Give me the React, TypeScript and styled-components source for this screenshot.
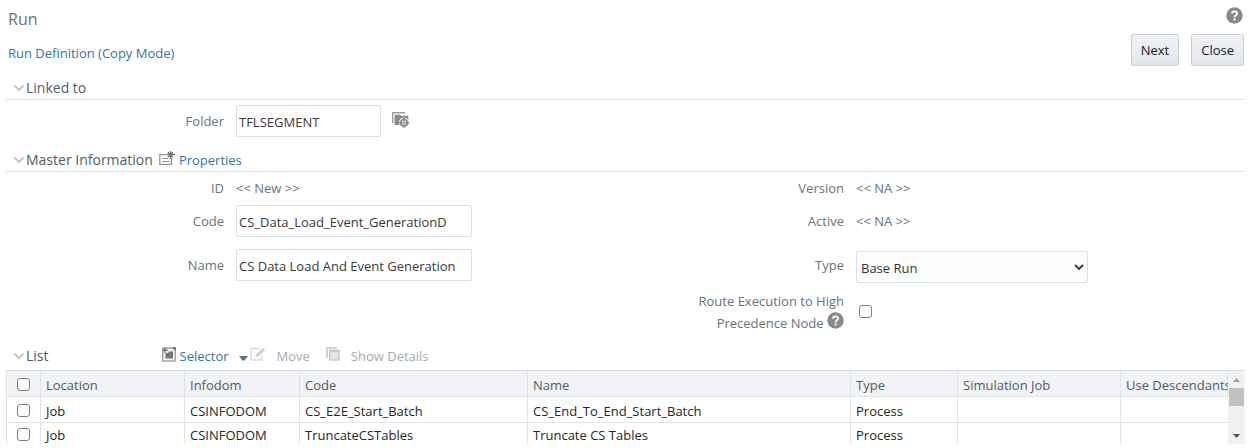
import React from "react";
import styled, { createGlobalStyle } from "styled-components";

const colors = {
  label: "#68737b",
  heading: "#515d66",
  link: "#2f74b0",
  line: "#dfe4e7",
  icon: "#868b8f",
  muted: "#a9a9a9",
};

const GlobalStyle = createGlobalStyle`
  *, *::before, *::after { box-sizing: border-box; }
  body {
    margin: 0;
    background: #fff;
    color: ${colors.label};
    font-family: "Open Sans", "Noto Sans", sans-serif;
    font-size: 13px;
    line-height: 18px;
  }
  button, input, select { font: inherit; margin: 0; }
`;

const Page = styled.main`
  padding: 7px 3px 2px 6px;
`;

const Header = styled.header`
  display: flex;
  justify-content: space-between;
  height: 71px;
  padding: 0 1px 0 2px;
`;

const Titles = styled.div`
  display: flex;
  flex-direction: column;
  gap: 14px;
  padding-top: 1px;
`;

const Title = styled.h1`
  margin: 0;
  font-size: 16px;
  font-weight: 400;
  line-height: 22px;
`;

const Actions = styled.div`
  display: flex;
  flex-direction: column;
  align-items: flex-end;
  gap: 10px;
`;

const ButtonRow = styled.div`
  display: flex;
  gap: 12px;
`;

const ActionButton = styled.button`
  height: 32px;
  padding: 0 9px;
  border: 1px solid #c9d2d9;
  border-radius: 2px;
  background: linear-gradient(#f1f3f6, #e2e6ea);
  color: #222;
`;

const IconButton = styled.button`
  display: inline-flex;
  padding: 0 1px 0 0;
  border: 0;
  background: none;
`;

const Link = styled.a`
  color: ${colors.link};
  text-decoration: none;
`;

const SectionHead = styled.div<{ $bare?: boolean }>`
  display: flex;
  align-items: center;
  height: ${(p) => (p.$bare ? 28 : 22)}px;
  padding: 0 0 ${(p) => (p.$bare ? 0 : 2)}px 7px;
  border-bottom: ${(p) => (p.$bare ? "0" : `1px solid ${colors.line}`)};
`;

const SectionTitle = styled.h2`
  display: flex;
  align-items: center;
  gap: 1px;
  margin: 0;
  color: ${colors.heading};
  font-size: 14px;
  font-weight: 400;
  line-height: 20px;
`;

const PropertiesLink = styled(Link)`
  display: flex;
  align-items: center;
  gap: 3px;
  margin-left: 6px;

  > svg { margin-bottom: 4px; }
`;

const Form = styled.div<{ $rows: string; $after: number }>`
  display: grid;
  grid-template-columns: minmax(0, 230fr) minmax(0, 390fr) minmax(0, 230fr) minmax(0, 389fr);
  grid-template-rows: ${(p) => p.$rows};
  align-items: center;
  padding-bottom: ${(p) => p.$after}px;
`;

const Label = styled.label`
  justify-self: end;
  max-width: 150px;
  padding-right: 12px;
  text-align: right;
`;

const WideLabel = styled(Label)`
  max-width: 160px;
  line-height: 22px;

  svg { vertical-align: -1px; }
`;

const Value = styled.div`
  display: flex;
  align-items: center;
  gap: 11px;
`;

const TextBox = styled.input<{ $width: number }>`
  width: ${(p) => p.$width}px;
  height: 32px;
  padding: 2px 2px 0;
  border: 1px solid #d9e0e4;
  border-radius: 2px;
  background: #fff;
  color: #3a3a3a;
`;

const SelectWrap = styled.div`
  display: grid;
  align-items: center;
  width: 232px;
  margin-top: 4px;

  > * { grid-area: 1 / 1; }
  > svg { justify-self: end; margin-right: 4px; pointer-events: none; }
`;

const Select = styled.select`
  appearance: none;
  width: 100%;
  height: 32px;
  padding: 2px 4px 0;
  border: 1px solid #d9e0e4;
  border-radius: 2px;
  background: #fbfdfd;
  color: #333;
`;

const CheckBox = styled.input.attrs({ type: "checkbox" })`
  appearance: none;
  display: block;
  width: 13px;
  height: 13px;
  border: 1px solid #7f7f7f;
  border-radius: 3px;
  background: #fff;

  &:checked { background: ${colors.link}; }
`;

const CheckCell = styled.div`
  padding: 0 3px;
`;

const Toolbar = styled.div`
  display: flex;
  align-items: center;
  margin-left: 113px;
`;

const Tool = styled.button<{ $gap: number; $after: number }>`
  display: flex;
  align-items: center;
  gap: ${(p) => p.$gap}px;
  margin-right: ${(p) => p.$after}px;
  padding: 0;
  border: 0;
  background: none;
  color: ${colors.link};

  &:disabled { color: ${colors.muted}; }
  > svg { margin-bottom: 4px; }
`;

const MenuMark = styled.span`
  display: flex;
  padding: 4px 0 0 6px;
`;

const ListFrame = styled.div`
  display: flex;
  border-top: 1px solid #d5dce1;
`;

const Table = styled.table`
  flex: 1;
  min-width: 0;
  width: 100%;
  table-layout: fixed;
  border-collapse: collapse;
  color: #262626;
`;

const HeadCell = styled.th`
  height: 25px;
  padding: 3px 0 0 5px;
  border: solid ${colors.line};
  border-width: 0 1px 1px;
  background: #f1f3f7;
  color: #555b61;
  font-weight: 400;
  text-align: left;
  white-space: nowrap;
`;

const Cell = styled.td`
  height: 26px;
  padding: 3px 0 0 5px;
  border: solid ${colors.line};
  border-width: 0 1px 1px;
  white-space: nowrap;

  tr:last-child > & { border-bottom: 0; height: 22px; }
  &:last-child { border-right: 0; }
`;

const RowCheck = styled(CheckBox)`
  margin-left: 5px;
`;

const ScrollBar = styled.div`
  display: flex;
  flex-direction: column;
  align-items: center;
  width: 17px;
  background: #f1f1f1;
`;

const ScrollArrow = styled.button`
  display: flex;
  align-items: center;
  justify-content: center;
  width: 17px;
  height: 17px;
  padding: 0;
  border: 0;
  background: none;
`;

const Track = styled.div`
  flex: 1;
`;

const Thumb = styled.div`
  width: 15px;
  height: 18px;
  background: #c1c1c1;
`;

const HelpIcon = () => (
  <svg width="17" height="17" viewBox="0 0 17 17" aria-hidden="true">
    <circle cx="8.5" cy="8.5" r="8.2" fill={colors.icon} />
    <path d="M6 6.6C6 3.6 11 3.6 11 6.5C11 8.3 8.6 8.2 8.6 10.2" fill="none" stroke="#fff" strokeWidth="1.9" />
    <rect x="7.6" y="11.4" width="2" height="2" fill="#fff" />
  </svg>
);

const Chevron = () => (
  <svg width="12" height="8" viewBox="0 0 12 8" aria-hidden="true">
    <path d="M1.5 1.5L6 6L10.5 1.5" fill="none" stroke="#c4c8ca" strokeWidth="2" />
  </svg>
);

const FolderIcon = () => (
  <svg width="17" height="17" viewBox="0 0 17 17" aria-hidden="true">
    <path d="M0.7 11V0.8H13" fill="none" stroke="#9a9ea1" strokeWidth="1.4" />
    <path d="M2.6 2.8H8L9 3.8H16.4V13H2.6Z" fill={colors.icon} />
    <circle cx="12" cy="10.6" r="5.2" fill="#fff" />
    <path d="M12 5.8V15.6M7.2 10.7H16.8" stroke={colors.icon} strokeWidth="2" />
    <circle cx="12" cy="10.7" r="4.3" fill={colors.icon} />
    <rect x="10" y="8.7" width="4" height="4" fill="#e4e6e7" />
    <path d="M12 8.7V12.7M10 10.7H14" stroke={colors.icon} strokeWidth="0.8" />
  </svg>
);

const PropertiesIcon = () => (
  <svg width="17" height="16" viewBox="0 0 17 16" aria-hidden="true">
    <path d="M8 4.6H0.8V14.4H12.6V8" fill="none" stroke="#92979a" strokeWidth="1.3" />
    <path d="M3 8.5H9M3 11.5H10.5" stroke="#92979a" strokeWidth="1.2" />
    <path d="M11.5 1V9M8 4.5H16M9 2.2L14 7.2M14 2.2L9 7.2" stroke="#73797d" strokeWidth="1.4" />
  </svg>
);

const SelectorIcon = () => (
  <svg width="14" height="15" viewBox="0 0 14 15" aria-hidden="true">
    <rect x="0.7" y="1" width="12.6" height="13" fill="#f1f2f3" stroke="#92979a" strokeWidth="1.2" />
    <path d="M3.5 6H6.5V4.5H11V11.5H3.5Z" fill="#6f757a" />
    <path d="M3 0.5V6M0.3 3.2H5.8" stroke="#73797d" strokeWidth="1.6" />
    <path d="M10.5 1H13.2V3.5" fill="none" stroke="#73797d" strokeWidth="1.8" />
  </svg>
);

const EditIcon = () => (
  <svg width="17" height="14" viewBox="0 0 17 14" aria-hidden="true">
    <path d="M9 1.5H1V13H12V8" fill="none" stroke="#dcdcdc" strokeWidth="1.4" />
    <path d="M5.5 10L6.3 7.2L13 0.8L15.2 3L8.4 9.4Z" fill="#d0d0d0" />
  </svg>
);

const DetailsIcon = () => (
  <svg width="14" height="14" viewBox="0 0 14 14" aria-hidden="true">
    <path d="M1 11V1H11" fill="none" stroke="#c6c6c6" strokeWidth="1.6" />
    <rect x="3.6" y="3.6" width="9.4" height="9.4" fill="#e6e6e6" stroke="#c2c2c2" strokeWidth="1.2" />
    <path d="M3 3.7H13.6" stroke="#c2c2c2" strokeWidth="2" />
  </svg>
);

const CaretIcon = () => (
  <svg width="9" height="5" viewBox="0 0 9 5" aria-hidden="true">
    <path d="M0 0H9L5.5 4.5H3.5Z" fill="#56728a" />
  </svg>
);

const SelectArrow = () => (
  <svg width="10" height="7" viewBox="0 0 10 7" aria-hidden="true">
    <path d="M1 1L5 5L9 1" fill="none" stroke="#333" strokeWidth="1.8" />
  </svg>
);

const Triangle = ({ down }: { down?: boolean }) => (
  <svg width="7" height="4" viewBox="0 0 7 4" aria-hidden="true">
    <path d={down ? "M0 0H7L3.5 4Z" : "M0 4H7L3.5 0Z"} fill={down ? "#505050" : "#a3a3a3"} />
  </svg>
);

const columns = [
  { name: "Location", width: 144 },
  { name: "Infodom", width: 115 },
  { name: "Code", width: 228 },
  { name: "Name" },
  { name: "Type", width: 107 },
  { name: "Simulation Job", width: 163 },
  { name: "Use Descendants", width: 107 },
];

const jobs = [
  ["Job", "CSINFODOM", "CS_E2E_Start_Batch", "CS_End_To_End_Start_Batch", "Process", "", ""],
  ["Job", "CSINFODOM", "TruncateCSTables", "Truncate CS Tables", "Process", "", ""],
];

export default function App() {
  return (
    <>
      <GlobalStyle />
      <Page>
        <Header>
          <Titles>
            <Title>Run</Title>
            <Link href="#definition">Run Definition (Copy Mode)</Link>
          </Titles>
          <Actions>
            <IconButton type="button" aria-label="Help"><HelpIcon /></IconButton>
            <ButtonRow>
              <ActionButton type="button">Next</ActionButton>
              <ActionButton type="button">Close</ActionButton>
            </ButtonRow>
          </Actions>
        </Header>

        <section>
          <SectionHead>
            <SectionTitle><Chevron />Linked to</SectionTitle>
          </SectionHead>
          <Form $rows="41px" $after={9}>
            <Label htmlFor="folder">Folder</Label>
            <Value>
              <TextBox id="folder" $width={145} defaultValue="TFLSEGMENT" />
              <IconButton type="button" aria-label="Browse folders"><FolderIcon /></IconButton>
            </Value>
          </Form>
        </section>

        <section>
          <SectionHead>
            <SectionTitle><Chevron />Master Information</SectionTitle>
            <PropertiesLink href="#properties"><PropertiesIcon />Properties</PropertiesLink>
          </SectionHead>
          <Form $rows="31px 36px 52px 41px" $after={10}>
            <Label as="span">ID</Label>
            <Value>&lt;&lt; New &gt;&gt;</Value>
            <Label as="span">Version</Label>
            <Value>&lt;&lt; NA &gt;&gt;</Value>

            <Label htmlFor="code">Code</Label>
            <TextBox id="code" $width={236} defaultValue="CS_Data_Load_Event_GenerationD" />
            <Label as="span">Active</Label>
            <Value>&lt;&lt; NA &gt;&gt;</Value>

            <Label htmlFor="name">Name</Label>
            <TextBox id="name" $width={236} defaultValue="CS Data Load And Event Generation" />
            <Label htmlFor="type">Type</Label>
            <SelectWrap>
              <Select id="type" defaultValue="Base Run">
                <option>Base Run</option>
              </Select>
              <SelectArrow />
            </SelectWrap>

            <span />
            <span />
            <WideLabel htmlFor="route">Route Execution to High Precedence Node <HelpIcon /></WideLabel>
            <CheckCell><CheckBox id="route" /></CheckCell>
          </Form>
        </section>

        <section>
          <SectionHead $bare>
            <SectionTitle><Chevron />List</SectionTitle>
            <Toolbar>
              <Tool type="button" $gap={4} $after={2}>
                <SelectorIcon />Selector<MenuMark><CaretIcon /></MenuMark>
              </Tool>
              <Tool type="button" disabled $gap={10} $after={16}><EditIcon />Move</Tool>
              <Tool type="button" disabled $gap={11} $after={0}><DetailsIcon />Show Details</Tool>
            </Toolbar>
          </SectionHead>
          <ListFrame>
            <Table>
              <colgroup>
                <col style={{ width: 34 }} />
                {columns.map((c) => <col key={c.name} style={{ width: c.width }} />)}
              </colgroup>
              <thead>
                <tr>
                  <HeadCell scope="col"><RowCheck aria-label="Select all rows" /></HeadCell>
                  {columns.map((c) => <HeadCell key={c.name} scope="col">{c.name}</HeadCell>)}
                </tr>
              </thead>
              <tbody>
                {jobs.map((job) => (
                  <tr key={job[2]}>
                    <Cell><RowCheck aria-label={`Select ${job[2]}`} /></Cell>
                    {job.map((text, i) => <Cell key={columns[i].name}>{text}</Cell>)}
                  </tr>
                ))}
              </tbody>
            </Table>
            <ScrollBar>
              <ScrollArrow type="button" aria-label="Scroll up"><Triangle /></ScrollArrow>
              <Thumb />
              <Track />
              <ScrollArrow type="button" aria-label="Scroll down"><Triangle down /></ScrollArrow>
            </ScrollBar>
          </ListFrame>
        </section>
      </Page>
    </>
  );
}
